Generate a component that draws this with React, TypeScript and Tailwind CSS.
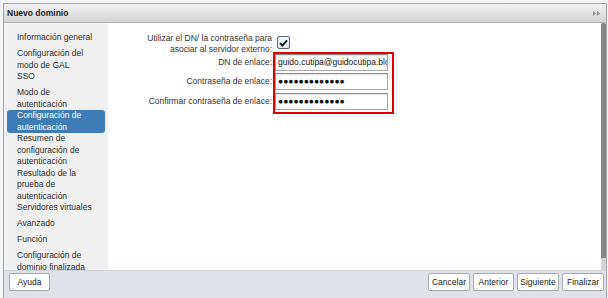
import React from 'react'

const steps: string[][] = [
    ['Información general'],
    ['Configuración del', 'modo de GAL'],
    ['SSO'],
    ['Modo de', 'autenticación'],
    ['Configuración de', 'autenticación'],
    ['Resumen de', 'configuración de', 'autenticación'],
    ['Resultado de la', 'prueba de', 'autenticación'],
    ['Servidores virtuales'],
    ['Avanzado'],
    ['Función'],
    ['Configuración de', 'dominio finalizada'],
]

const activeStep = 4

const DoubleArrow = () => (
    <svg width="7" height="5" viewBox="0 0 7 5">
        <path d="M0 0 L3 2.5 L0 5 Z" fill="#8a8a8a" />
        <path d="M4 0 L7 2.5 L4 5 Z" fill="#8a8a8a" />
    </svg>
)

const CheckBox = () => (
    <div className="w-[13px] h-[13px] rounded-[2px] border border-[#55657a] bg-gradient-to-b from-[#f4f8fc] to-[#dde6f0] flex items-center justify-center">
        <svg width="9" height="8" viewBox="0 0 9 8">
            <path d="M1 4.2 L3.4 6.6 L8 1.4" stroke="#1a1a1a" strokeWidth="1.9" fill="none" />
        </svg>
    </div>
)

const FieldRow: React.FC<{ label: string; children: React.ReactNode }> = ({ label, children }) => (
    <div className="flex items-center h-[17px]">
        <div className="w-[128px] text-right whitespace-nowrap leading-[17px]">{label}</div>
        <div className="ml-[3px] w-[113px] h-[17px] border border-[#a8a8a8] border-t-[#8c8c8c] bg-white shadow-[inset_0_1px_1px_rgba(0,0,0,0.12)] overflow-hidden whitespace-nowrap pl-[2px] leading-[15px] text-[#111]">
            {children}
        </div>
    </div>
)

const FooterButton: React.FC<{ text: string; w: string }> = ({ text, w }) => (
    <div className={`${w} h-[18px] bg-white border border-[#a9a9a9] rounded-[2px] flex items-center justify-center text-[#222]`}>
        {text}
    </div>
)

export default function App() {
    return (
        <div className="w-[608px] h-[298px] bg-[#f3f4f6] overflow-hidden font-['Liberation_Sans',Arial,sans-serif] text-[8.5px] text-[#333]">
            <div className="ml-[3px] mt-[3px] w-[604px] h-[310px] border border-[#a3a3a3] flex flex-col">
                {/* title bar */}
                <div className="h-[19px] bg-gradient-to-b from-[#f2f2f2] to-[#d3d3d3] border-b border-[#b3b3b3] flex items-center justify-between pl-[3px] pr-[6px]">
                    <span className="font-bold text-[8.5px] text-[#1e1e1e]">Nuevo dominio</span>
                    <DoubleArrow />
                </div>

                <div className="flex h-[247px]">
                    {/* steps */}
                    <div className="w-[104px] bg-[#f0f0f0] pt-[9px] px-[3px] overflow-hidden text-[#2e2e2e]">
                        {steps.map((lines, i) => (
                            <div
                                key={i}
                                className={
                                    i === activeStep
                                        ? 'min-h-[16px] leading-[11.5px] px-[7px] rounded-[3px] bg-[#3d7cb6] text-white whitespace-nowrap'
                                        : 'min-h-[16px] leading-[11.5px] px-[10px] whitespace-nowrap'
                                }
                            >
                                {lines.map((l, j) => (
                                    <div key={j} className={i === activeStep ? 'pl-[3px]' : ''}>{l}</div>
                                ))}
                            </div>
                        ))}
                    </div>

                    {/* form */}
                    <div className="flex-1 bg-white pt-[10px] pl-[36px]">
                        <div className="flex items-start">
                            <div className="w-[128px] text-right leading-[10.5px]">
                                Utilizar el DN/ la contraseña para asociar al servidor externo:
                            </div>
                            <div className="ml-[5px] mt-[3px]">
                                <CheckBox />
                            </div>
                        </div>
                        <div className="relative flex flex-col">
                            <div className="absolute left-[129px] top-[-2px] w-[121px] h-[62px] border-2 border-[#e20000] pointer-events-none" />
                            <FieldRow label="DN de enlace:">guido.cutipa@guidocutipa.blog</FieldRow>
                            <div className="h-[2px]" />
                            <FieldRow label="Contraseña de enlace:">
                                <span>●●●●●●●●●●●●●</span>
                            </FieldRow>
                            <div className="h-[3px]" />
                            <FieldRow label="Confirmar contraseña de enlace:">
                                <span>●●●●●●●●●●●●●</span>
                            </FieldRow>
                        </div>
                    </div>

                    {/* scrollbar */}
                    <div className="w-[5px] flex flex-col bg-[#d4d4d4]">
                        <div className="h-[235px] bg-[#858585] rounded-t-[2px]" />
                    </div>
                </div>

                {/* footer */}
                <div className="flex-1 bg-[#dfe2e8] border-t border-[#cfd3da] flex justify-between pt-[2px] pl-[5px] pr-[2px]">
                    <FooterButton text="Ayuda" w="w-[41px]" />
                    <div className="flex gap-[3px]">
                        <FooterButton text="Cancelar" w="w-[42px]" />
                        <FooterButton text="Anterior" w="w-[41px]" />
                        <FooterButton text="Siguiente" w="w-[42px]" />
                        <FooterButton text="Finalizar" w="w-[42px]" />
                    </div>
                </div>
            </div>
        </div>
    )
}
